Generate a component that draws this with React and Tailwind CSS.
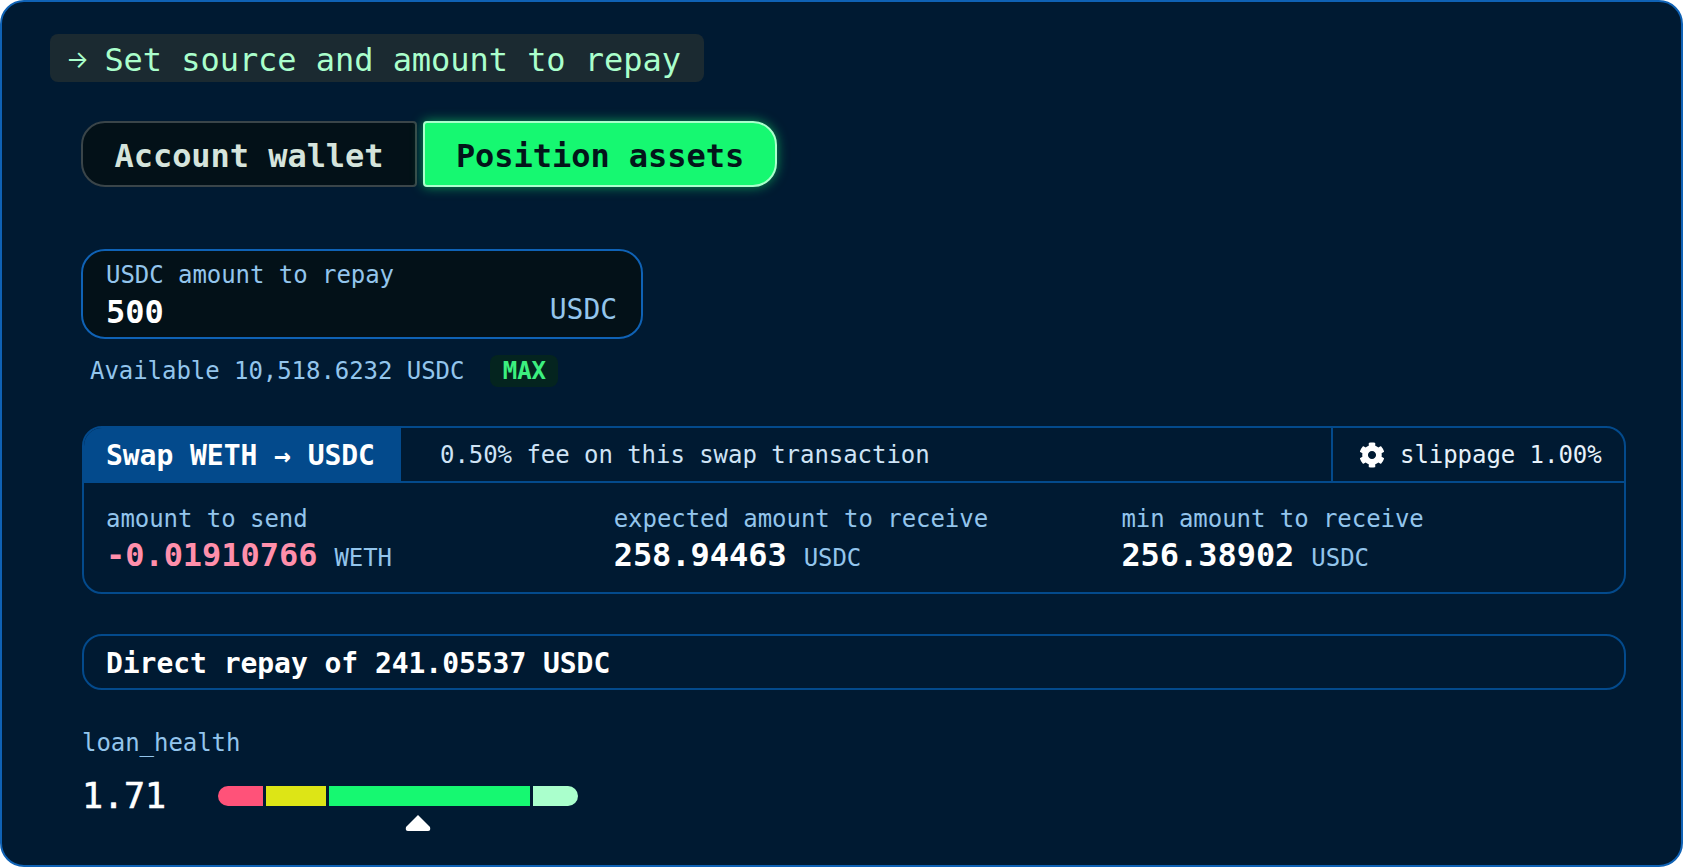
import React from "react";
import { FaCog } from "react-icons/fa";

function Stat({ label, value, unit, valueClass }) {
  return (
    <div className="flex flex-col">
      <div className="text-[24px] leading-[30px] text-[#93c5ec]">{label}</div>
      <div className="flex items-baseline gap-[17px] mt-[1px] leading-[40px]">
        <span className={"text-[32px] font-bold " + valueClass}>{value}</span>
        <span className="text-[24px] text-[#93c5ec]">{unit}</span>
      </div>
    </div>
  );
}

export default function App() {
  return (
    <div className="w-[1683px] h-[867px] bg-white [font-family:'DejaVu_Sans_Mono',monospace] tracking-[-0.05px]">
      <div className="w-full h-full rounded-[24px] border-2 border-[#0f62b5] bg-[#001a32] pl-[48px] pr-[55px] pt-[32px] flex flex-col items-start">
        <div className="h-[48px] w-[654px] flex items-center rounded-[8px] bg-[#1b2a31] pl-[16px] pt-[3px] text-[32px] text-[#aaffcc]">
          <span className="inline-block w-[38.4px] text-[24px] [font-family:Inter,sans-serif]">→</span>
          <span>Set source and amount to repay</span>
        </div>

        <div className="ml-[31px] mt-[39px] flex gap-[6px]">
          <div className="w-[336px] h-[66px] flex items-center justify-center rounded-l-[24px] rounded-r-[4px] border-2 border-[#3a4549] bg-[#031118] pt-[3px] text-[32px] font-bold text-[#d5e4dc]">
            Account wallet
          </div>
          <div className="w-[354px] h-[66px] flex items-center justify-center rounded-r-[24px] rounded-l-[4px] border-2 border-[#aaffcc] bg-[#16f871] pt-[3px] text-[32px] font-bold text-[#03151a] shadow-[0_0_12px_rgba(22,248,113,0.55)]">
            Position assets
          </div>
        </div>

        <div className="ml-[31px] mt-[62px] w-[562px] h-[90px] rounded-[24px] border-2 border-[#0f62b5] bg-[#031118] pl-[23px] pr-[24px] pt-[8px]">
          <div className="text-[24px] leading-[32px] text-[#93c5ec]">USDC amount to repay</div>
          <div className="flex items-center justify-between h-[38px]">
            <span className="text-[32px] font-bold text-white pt-[3px]">500</span>
            <span className="text-[28px] text-[#93c5ec]">USDC</span>
          </div>
        </div>

        <div className="ml-[40px] mt-[16px] h-[32px] flex items-center">
          <span className="text-[24px] text-[#93c5ec]">Available 10,518.6232 USDC</span>
          <span className="ml-[26px] h-[32px] w-[68px] flex items-center justify-center rounded-[8px] bg-[#04241f] text-[24px] font-bold text-[#3cf07f]">MAX</span>
        </div>

        <div className="ml-[32px] mt-[39px] self-stretch h-[168px] rounded-[20px] border-2 border-[#034a8c] overflow-hidden">
          <div className="h-[55px] flex items-stretch border-b-2 border-[#034a8c]">
            <div className="w-[317px] flex items-center bg-[#034a8c] pl-[22px] pt-[2px] text-[28px] font-bold text-white">
              Swap WETH → USDC
            </div>
            <div className="flex-1 flex items-center pl-[39px] text-[24px] text-[#cfe3f5]">
              0.50% fee on this swap transaction
            </div>
            <div className="w-[293px] flex items-center border-l-2 border-[#034a8c] pl-[26px] text-[24px] text-[#e6f1fa]">
              <FaCog className="w-[26px] h-[26px] text-white" />
              <span className="ml-[15px]">slippage 1.00%</span>
            </div>
          </div>
          <div className="grid grid-cols-[repeat(3,507.7px)] pl-[22px] pt-[21px]">
            <Stat label="amount to send" value="-0.01910766" unit="WETH" valueClass="text-[#ff8fab]" />
            <Stat label="expected amount to receive" value="258.94463" unit="USDC" valueClass="text-white" />
            <Stat label="min amount to receive" value="256.38902" unit="USDC" valueClass="text-white" />
          </div>
        </div>

        <div className="ml-[32px] mt-[40px] self-stretch h-[56px] flex items-center rounded-[20px] border-2 border-[#034a8c] pl-[22px] pt-[3px] text-[28px] font-bold text-white">
          Direct repay of 241.05537 USDC
        </div>

        <div className="ml-[32px] mt-[38px] text-[24px] leading-[30px] text-[#93c5ec]">loan_health</div>

        <div className="ml-[32px] mt-[15px] flex items-start">
          <div className="w-[136px] text-[35px] leading-[46px] text-white [-webkit-text-stroke:0.6px_white]">1.71</div>
          <div className="relative mt-[13px] w-[360px] h-[20px] flex gap-[3px]">
            <div className="w-[45px] rounded-l-full bg-[#ff5279]"></div>
            <div className="w-[60px] bg-[#dde516]"></div>
            <div className="w-[201px] bg-[#16f871]"></div>
            <div className="w-[45px] rounded-r-full bg-[#aaffcc]"></div>
            <svg className="absolute left-[187px] top-[29px]" width="26" height="16" viewBox="0 0 26 16">
              <path d="M13 0 L25 12 Q26 16 23 16 L3 16 Q0 16 1 12 Z" fill="#fff" />
            </svg>
          </div>
        </div>
      </div>
    </div>
  );
}
